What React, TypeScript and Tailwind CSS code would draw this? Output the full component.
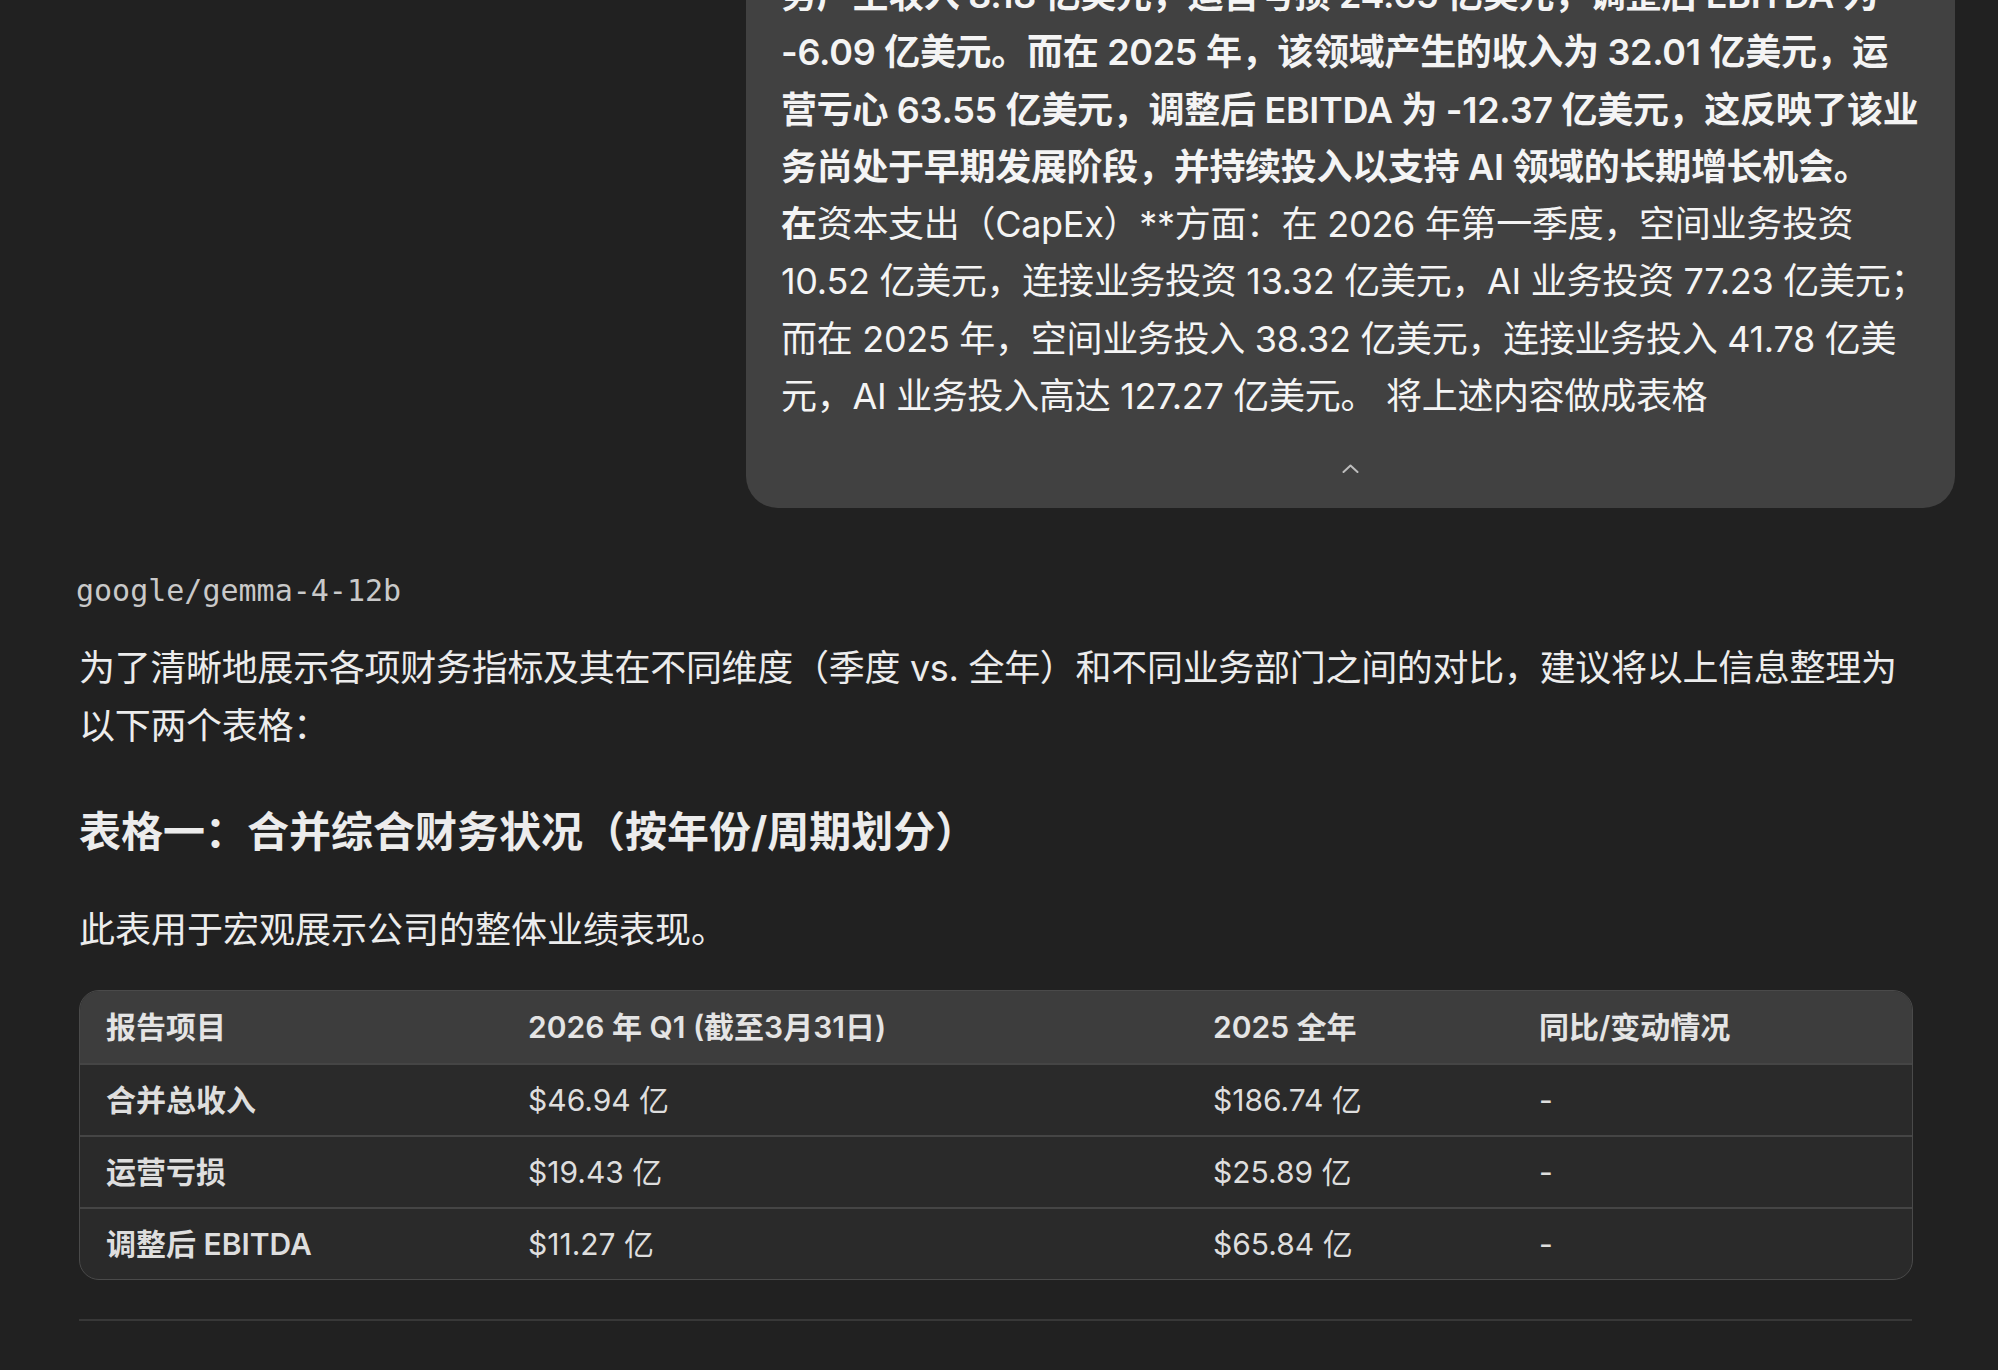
import React from 'react';

const FONT = { fontFamily: 'Inter, "Noto Sans CJK SC", sans-serif' };

const bubbleLines: { text: React.ReactNode; bold?: boolean }[] = [
  { text: '务产生收入 8.18 亿美元，运营亏损 24.65 亿美元，调整后 EBITDA 为', bold: true },
  { text: '-6.09 亿美元。而在 2025 年，该领域产生的收入为 32.01 亿美元，运', bold: true },
  { text: '营亏心 63.55 亿美元，调整后 EBITDA 为 -12.37 亿美元，这反映了该业', bold: true },
  { text: '务尚处于早期发展阶段，并持续投入以支持 AI 领域的长期增长机会。', bold: true },
  {
    text: (
      <>
        <span className="font-semibold">在</span>资本支出（CapEx）**方面：在 2026 年第一季度，空间业务投资
      </>
    ),
  },
  { text: '10.52 亿美元，连接业务投资 13.32 亿美元，AI 业务投资 77.23 亿美元；' },
  { text: '而在 2025 年，空间业务投入 38.32 亿美元，连接业务投入 41.78 亿美' },
  { text: '元，AI 业务投入高达 127.27 亿美元。 将上述内容做成表格' },
];

const rows = [
  ['合并总收入', '$46.94 亿', '$186.74 亿', '-'],
  ['运营亏损', '$19.43 亿', '$25.89 亿', '-'],
  ['调整后 EBITDA', '$11.27 亿', '$65.84 亿', '-'],
];

const cols = 'grid grid-cols-[422px_685px_326px_1fr] items-center';

export default function App() {
  return (
    <div className="w-full h-[1370px] overflow-hidden bg-[#212121] text-[#ececec]" style={FONT}>
      {/* user message bubble, scrolled partly out of view */}
      <div className="flex justify-end pr-[43px] -mt-[80px]">
        <div className="w-[1209px] bg-[#414141] rounded-[32px] px-[35px] pt-[47px] pb-[35px] flex flex-col">
          {bubbleLines.map((l, i) => (
            <div
              key={i}
              className={`whitespace-nowrap text-[36px] leading-[57.3px] tracking-[-0.3px] text-[#f4f4f4] ${l.bold ? 'font-semibold' : ''}`}
            >
              {l.text}
            </div>
          ))}
          <div className="flex justify-center mt-[39px]">
            <svg width="17" height="9" viewBox="0 0 17 9" fill="none">
              <path d="M1.5 8 L8.5 1.5 L15.5 8" stroke="#bdbdbd" strokeWidth="2" strokeLinecap="round" strokeLinejoin="round" />
            </svg>
          </div>
        </div>
      </div>

      <div className="pl-[79px] pr-[86px] flex flex-col">
        <div
          className="mt-[65px] -ml-[3px] text-[30px] leading-[36px] text-[#c9c9c9]"
          style={{ fontFamily: '"DejaVu Sans Mono", "Liberation Mono", monospace' }}
        >
          google/gemma-4-12b
        </div>

        <div className="mt-[31px] text-[36px] leading-[57.3px] tracking-[-0.3px] whitespace-nowrap">
          <div>为了清晰地展示各项财务指标及其在不同维度（季度 vs. 全年）和不同业务部门之间的对比，建议将以上信息整理为</div>
          <div>以下两个表格：</div>
        </div>

        <h3 className="mt-[49px] text-[42px] leading-[56px] font-bold whitespace-nowrap">
          表格一：合并综合财务状况（按年份/周期划分）
        </h3>

        <p className="mt-[42px] text-[36px] leading-[57.3px]">此表用于宏观展示公司的整体业绩表现。</p>

        <div className="mt-[31px] w-[1834px] rounded-[20px] border border-[#4a4a4a] overflow-hidden bg-[#2a2a2a]">
          <div className={`${cols} h-[72px] bg-[#3d3d3d] font-semibold text-[30px] text-[#e4e4e4]`}>
            <div className="pl-[26px]">报告项目</div>
            <div className="pl-[26px]">2026 年 Q1 (截至3月31日)</div>
            <div className="pl-[26px]">2025 全年</div>
            <div className="pl-[26px]">同比/变动情况</div>
          </div>
          {rows.map((r) => (
            <div key={r[0]} className={`${cols} h-[72px] border-t-2 border-[#454545] text-[30px] text-[#dedede]`}>
              <div className="pl-[26px] font-semibold">{r[0]}</div>
              <div className="pl-[26px]">{r[1]}</div>
              <div className="pl-[26px]">{r[2]}</div>
              <div className="pl-[26px]">{r[3]}</div>
            </div>
          ))}
        </div>

        <div className="mt-[39px] w-[1833px] h-[2px] bg-[#383838]" />
      </div>
    </div>
  );
}
